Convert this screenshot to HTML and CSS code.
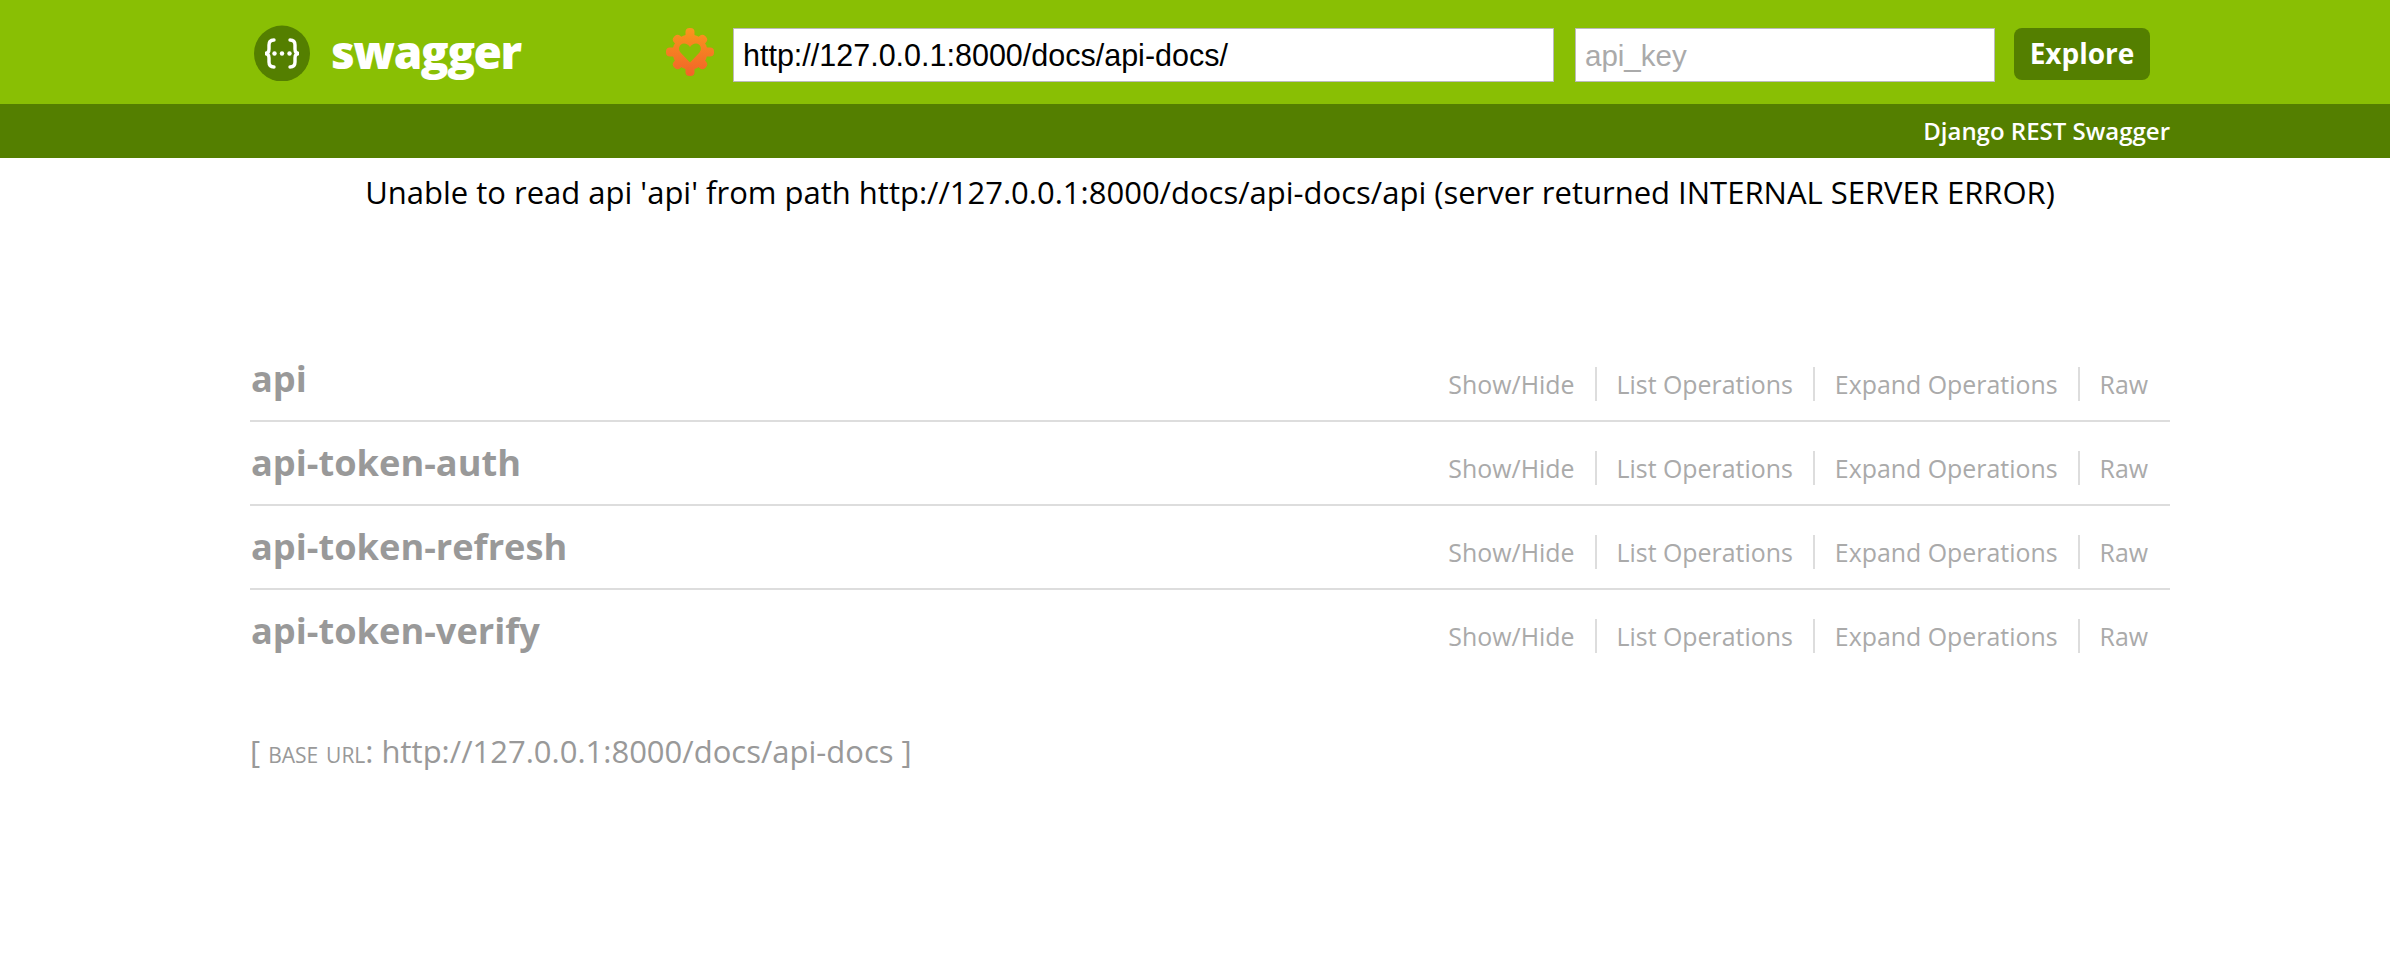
FILE: index.html
```html
<!DOCTYPE html>
<html lang="en">
<head>
  <meta charset="UTF-8">
  <title>Swagger UI</title>
  <link rel="stylesheet" href="styles.css">
</head>
<body>
  <header class="header">
    <div class="wrap header-row">
      <div class="brand">
        <svg class="brand-icon" viewBox="0 0 56 56" width="56" height="56" aria-hidden="true">
          <circle cx="28" cy="28.5" r="28" fill="#547f00"/>
          <g fill="none" stroke="#fff" stroke-width="3.4" stroke-linecap="round">
            <path d="M20 15c-4 0-5 2-5 5v4c0 3-1 4.500-4 4.500 3 0 4 1.500 4 4.500v4c0 3 1 5 5 5"/>
            <path d="M36 15c4 0 5 2 5 5v4c0 3 1 4.500 4 4.500-3 0-4 1.500-4 4.500v4c0 3-1 5-5 5"/>
          </g>
          <g fill="#fff">
            <circle cx="20.500" cy="28.500" r="2.200"/>
            <circle cx="28" cy="28.500" r="2.200"/>
            <circle cx="35.500" cy="28.500" r="2.200"/>
          </g>
        </svg>
        <span class="brand-name">swagger</span>
      </div>
      <form class="api-form">
        <svg class="gear" viewBox="0 0 48 48" width="48" height="48" aria-hidden="true">
          <defs>
            <linearGradient id="gearFill" x1="0" y1="0" x2="0" y2="1">
              <stop offset="0" stop-color="#f9971d"/>
              <stop offset="1" stop-color="#f26329"/>
            </linearGradient>
            <mask id="gearMask">
              <g fill="#fff">
                <circle cx="24" cy="24" r="17.500"/>
                <rect x="19.500" y="0" width="9" height="48" rx="4"/>
                <rect x="0" y="19.500" width="48" height="9" rx="4"/>
                <rect x="19.500" y="2" width="9" height="44" rx="4" transform="rotate(45 24 24)"/>
                <rect x="19.500" y="2" width="9" height="44" rx="4" transform="rotate(-45 24 24)"/>
              </g>
              <path fill="#000" d="M24 34.500 14.500 24.500c-3-3.500-1-9 3.500-9 2.500 0 4.500 1.200 6 3.500 1.500-2.300 3.500-3.500 6-3.500 4.500 0 6.500 5.500 3.500 9z"/>
            </mask>
          </defs>
          <rect width="48" height="48" fill="url(#gearFill)" mask="url(#gearMask)"/>
        </svg>
        <input class="field field-url" type="text" value="http://127.0.0.1:8000/docs/api-docs/">
        <input class="field field-key" type="text" placeholder="api_key">
        <button class="explore" type="button">Explore</button>
      </form>
    </div>
  </header>

  <div class="subheader">
    <div class="wrap subheader-text">Django REST Swagger</div>
  </div>

  <main class="wrap">
    <p class="message">Unable to read api 'api' from path http://127.0.0.1:8000/docs/api-docs/api (server returned INTERNAL SERVER ERROR)</p>

    <ul class="resources">
      <li class="resource">
        <h2 class="resource-title">api</h2>
        <ul class="resource-links">
          <li>Show/Hide</li>
          <li>List Operations</li>
          <li>Expand Operations</li>
          <li>Raw</li>
        </ul>
      </li>
      <li class="resource">
        <h2 class="resource-title">api-token-auth</h2>
        <ul class="resource-links">
          <li>Show/Hide</li>
          <li>List Operations</li>
          <li>Expand Operations</li>
          <li>Raw</li>
        </ul>
      </li>
      <li class="resource">
        <h2 class="resource-title">api-token-refresh</h2>
        <ul class="resource-links">
          <li>Show/Hide</li>
          <li>List Operations</li>
          <li>Expand Operations</li>
          <li>Raw</li>
        </ul>
      </li>
      <li class="resource">
        <h2 class="resource-title">api-token-verify</h2>
        <ul class="resource-links">
          <li>Show/Hide</li>
          <li>List Operations</li>
          <li>Expand Operations</li>
          <li>Raw</li>
        </ul>
      </li>
    </ul>

    <p class="base-url">[ <span class="base-label">base url</span>: http://127.0.0.1:8000/docs/api-docs ]</p>
  </main>
</body>
</html>
```

FILE: styles.css
```css
* {
  margin: 0;
  padding: 0;
  box-sizing: border-box;
}

body {
  font-family: "Open Sans", "Noto Sans", sans-serif;
  background: #fff;
  color: #000;
}

ul {
  list-style: none;
}

.wrap {
  width: 1920px;
  margin-left: 250px;
}

.header {
  background: #89bf04;
  height: 104px;
}

.header-row {
  display: flex;
  align-items: flex-start;
  height: 100%;
  padding-top: 25px;
}

.brand {
  display: flex;
  align-items: center;
  width: 416px;
  padding-left: 4px;
}

.brand-name {
  margin-left: 21px;
  margin-top: -4px;
  color: #fff;
  font-size: 46px;
  font-weight: 800;
  letter-spacing: -1.5px;
  line-height: 56px;
}

.api-form {
  display: flex;
  align-items: flex-start;
  margin-top: 3px;
}

.gear {
  margin-right: 19px;
}

.field {
  height: 54px;
  padding: 0 9px;
  border: 1px solid #bbb;
  outline: 2px solid #fff;
  outline-offset: -3px;
  background: #fff;
  font-family: "Liberation Sans", Arial, sans-serif;
  font-size: 30.5px;
  color: #000;
}

.field::placeholder {
  color: #aaa;
  font-size: 29.5px;
  opacity: 1;
}

.field-url {
  width: 821px;
  margin-right: 21px;
}

.field-key {
  width: 420px;
  margin-right: 19px;
}

.explore {
  width: 136px;
  height: 52px;
  padding-bottom: 3px;
  border: 0;
  border-radius: 8px;
  background: #547f00;
  color: #fff;
  font-family: inherit;
  font-size: 28px;
  font-weight: 700;
}

.subheader {
  background: #547f00;
  height: 54px;
}

.subheader-text {
  color: #fff;
  font-size: 24px;
  font-weight: 600;
  line-height: 54px;
  text-align: right;
}

.message {
  padding-top: 14px;
  font-size: 31px;
  line-height: 40px;
  text-align: center;
}

.resources {
  margin-top: 126px;
}

.resource {
  display: flex;
  justify-content: space-between;
  height: 84px;
  padding-top: 15px;
  padding-left: 1px;
  border-bottom: 2px solid #ddd;
}

.resource:last-child {
  border-bottom: 0;
}

.resource-title {
  color: #999;
  font-size: 36.2px;
  font-weight: 700;
  line-height: 50px;
}

.resource-links {
  display: flex;
  align-items: flex-start;
  padding-top: 14px;
  padding-right: 22px;
}

.resource-links li {
  padding: 0 20px;
  border-right: 2px solid #ddd;
  color: #aaa;
  font-size: 24.9px;
  font-weight: 500;
  line-height: 34px;
}

.resource-links li:last-child {
  padding-right: 0;
  border-right: 0;
}

.base-url {
  margin-top: 57px;
  color: #999;
  font-size: 31px;
  line-height: 40px;
}

.base-label {
  font-size: 30.3px;
  font-variant: small-caps;
}
```
